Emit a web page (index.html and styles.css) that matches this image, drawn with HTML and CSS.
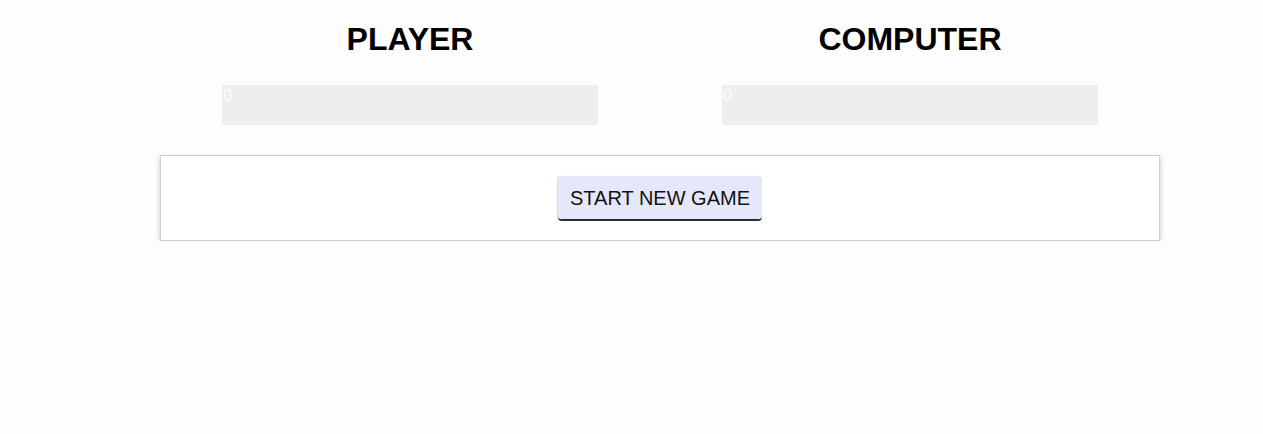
FILE: index.html
```html
<!DOCTYPE html>
<html>
<head>
<meta charset="utf-8">
<link rel="stylesheet" href="styles.css">
</head>
<body>
<div class="page">
  <div class="scores">
    <div class="side">
      <h1 class="title">PLAYER</h1>
      <div class="bar">0</div>
    </div>
    <div class="side">
      <h1 class="title">COMPUTER</h1>
      <div class="bar">0</div>
    </div>
  </div>
  <div class="panel">
    <button class="start">START NEW GAME</button>
  </div>
</div>
</body>
</html>
```
FILE: styles.css
```css
html, body {
  margin: 0;
  padding: 0;
  background: #fdfdfd;
  font-family: "Liberation Sans", Arial, sans-serif;
}
.page {
  width: 1000px;
  margin: 0 0 0 160px;
  padding-top: 21px;
}
.scores {
  display: flex;
}
.side {
  flex: 1;
  display: flex;
  flex-direction: column;
  align-items: center;
}
.title {
  margin: 0;
  font-size: 32px;
  font-weight: bold;
  color: #000;
  line-height: 37px;
}
.bar {
  margin-top: 27px;
  width: 376px;
  height: 40px;
  background: #eeeeee;
  color: #fff;
  font-size: 16px;
  line-height: 22px;
  box-sizing: border-box;
  padding-left: 1px;
}
.panel {
  margin-top: 30px;
  border: 1px solid #cfcfcf;
  background: #fff;
  box-shadow: 0 2px 5px rgba(0,0,0,0.22);
  padding: 20px 0 19px;
  display: flex;
  justify-content: center;
}
.start {
  font-family: "Liberation Sans", Arial, sans-serif;
  font-size: 20px;
  color: #111;
  background: #e5e7fb;
  border: none;
  border-bottom: 2px solid #2a2a3a;
  border-radius: 4px;
  box-shadow: -1px 0 1px rgba(0,0,0,0.15);
  height: 45px;
  padding: 2px 12px 0;
  cursor: pointer;
}
```
